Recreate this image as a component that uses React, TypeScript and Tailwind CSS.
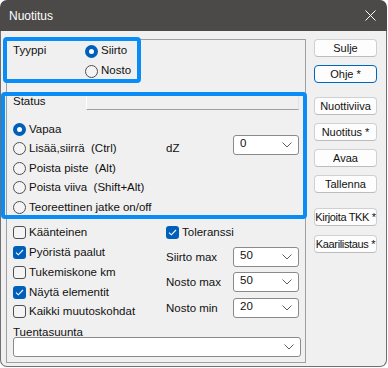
import React from "react";

const Chevron = () => (
  <svg width="10" height="6" viewBox="0 0 10 6" className="shrink-0">
    <path d="M0.5 0.5 L5 5 L9.5 0.5" fill="none" stroke="#606060" strokeWidth="1" />
  </svg>
);

const Radio = ({ label, checked = false }: { label: string; checked?: boolean }) => (
  <div className="flex items-center gap-[3px] h-full">
    {checked ? (
      <div className="w-[13px] h-[13px] rounded-full bg-[#005fb8] flex items-center justify-center shrink-0">
        <div className="w-[5px] h-[5px] rounded-full bg-white" />
      </div>
    ) : (
      <div className="w-[13px] h-[13px] rounded-full border border-[#4f4f4f] bg-[#f4f4f4] shrink-0" />
    )}
    <span className="whitespace-pre">{label}</span>
  </div>
);

const Check = ({ label, checked = false }: { label: string; checked?: boolean }) => (
  <div className="flex items-center gap-[3px] h-full">
    {checked ? (
      <div className="w-[13px] h-[13px] rounded-[3px] bg-[#005fb8] flex items-center justify-center shrink-0">
        <svg width="9" height="7" viewBox="0 0 9 7">
          <path d="M1 3.6 L3.3 5.8 L8 1" fill="none" stroke="white" strokeWidth="1.1" />
        </svg>
      </div>
    ) : (
      <div className="w-[13px] h-[13px] rounded-[3px] border border-[#4f4f4f] bg-[#f4f4f4] shrink-0" />
    )}
    <span className="whitespace-nowrap">{label}</span>
  </div>
);

const Combo = ({ value = "", width }: { value?: string; width: string }) => (
  <div
    className={`${width} h-[20px] bg-white border border-[#8a8a8a] rounded-[3px] flex items-center justify-between pl-[6px] pr-[6px] shrink-0`}
  >
    <span className="leading-none -mt-[2px]">{value}</span>
    <Chevron />
  </div>
);

const Btn = ({ label, className = "", focus = false }: { label: string; className?: string; focus?: boolean }) => (
  <div
    className={`w-[63px] h-[18px] rounded-[4px] bg-[#fdfdfd] flex items-center justify-center overflow-hidden whitespace-nowrap text-[11px] ${
      focus ? "border border-[#0067c0]" : "border border-[#d0d0d0] border-b-[#bdbdbd]"
    } ${className}`}
  >
    <span className="shrink-0">{label}</span>
  </div>
);

export default function App() {
  return (
    <div className="w-[388px] h-[368px] bg-white relative text-[11.5px] text-[#111] font-['Liberation_Sans',Arial,sans-serif]">
      <div className="w-[387px] h-[367px] flex flex-col">
        {/* title bar */}
        <div className="h-[31px] bg-[#4b4a48] rounded-t-[7px] flex items-center justify-between pl-[9px] pr-[11px] shrink-0">
          <span className="text-white text-[12px]">Nuotitus</span>
          <svg width="11" height="11" viewBox="0 0 11 11">
            <path d="M0.5 0.5 L10.5 10.5 M10.5 0.5 L0.5 10.5" stroke="white" strokeWidth="1" />
          </svg>
        </div>

        {/* body */}
        <div className="flex-1 bg-[#f0f0f0] border-x border-b border-[#707070] rounded-b-[7px] flex pl-[5px] pt-[8px]">
          {/* left panel */}
          <div className="w-[300px] h-[324px] border border-[#a0a0a0] pl-[6px] pr-[6px] flex flex-col">
            {/* Tyyppi */}
            <div className="flex pt-[1px]">
              <div className="w-[72px] h-5 flex items-center">Tyyppi</div>
              <div className="flex flex-col">
                <div className="h-5">
                  <Radio label="Siirto" checked />
                </div>
                <div className="h-5">
                  <Radio label="Nosto" />
                </div>
              </div>
            </div>

            {/* Status header */}
            <div className="flex mt-[13px] h-[16px]">
              <div className="w-[73px] flex items-center">Status</div>
              <div className="w-[213px] border-l border-l-white border-t border-t-[#e2e2e2] border-b border-b-[#a0a0a0] border-r border-r-[#e2e2e2]" />
            </div>

            {/* Status radios */}
            <div className="flex mt-[9.5px]">
              <div className="w-[155px] flex flex-col">
                <div className="h-[19.5px]">
                  <Radio label="Vapaa" checked />
                </div>
                <div className="h-[19.5px]">
                  <Radio label="Lisää,siirrä  (Ctrl)" />
                </div>
                <div className="h-[19.5px]">
                  <Radio label="Poista piste  (Alt)" />
                </div>
                <div className="h-[19.5px]">
                  <Radio label="Poista viiva  (Shift+Alt)" />
                </div>
                <div className="h-[19.5px]">
                  <Radio label="Teoreettinen jatke on/off" />
                </div>
              </div>
              <div className="flex items-start">
                <div className="w-[67px] h-[19.5px] mt-[19.5px] flex items-center">dZ</div>
                <div className="mt-[15.5px]">
                  <Combo value="0" width="w-[66px]" />
                </div>
              </div>
            </div>

            {/* options */}
            <div className="flex mt-[6px]">
              <div className="w-[156px] flex flex-col">
                <div className="h-[19.75px]">
                  <Check label="Käänteinen" />
                </div>
                <div className="h-[19.75px]">
                  <Check label="Pyöristä paalut" checked />
                </div>
                <div className="h-[19.75px]">
                  <Check label="Tukemiskone km" />
                </div>
                <div className="h-[19.75px]">
                  <Check label="Näytä elementit" checked />
                </div>
                <div className="h-[19.75px]">
                  <Check label="Kaikki muutoskohdat" />
                </div>
              </div>
              <div className="flex flex-col">
                <div className="h-[19.75px]">
                  <Check label="Toleranssi" checked />
                </div>
                <div className="flex items-center mt-[4px]">
                  <div className="w-[67px] pt-[1px]">Siirto max</div>
                  <Combo value="50" width="w-[66px]" />
                </div>
                <div className="flex items-center mt-[5px]">
                  <div className="w-[67px] pt-[1px]">Nosto max</div>
                  <Combo value="50" width="w-[66px]" />
                </div>
                <div className="flex items-center mt-[6px]">
                  <div className="w-[67px] pt-[1px]">Nosto min</div>
                  <Combo value="20" width="w-[66px]" />
                </div>
              </div>
            </div>

            <div className="mt-[3px] h-[12px] leading-[15px]">Tuentasuunta</div>
            <Combo width="w-[288px]" />
          </div>

          {/* right buttons */}
          <div className="ml-[8px] flex flex-col">
            <Btn label="Sulje" />
            <Btn label="Ohje *" focus className="mt-[8px]" />
            <Btn label="Nuottiviiva" className="mt-[14px]" />
            <Btn label="Nuotitus *" className="mt-[8px]" />
            <Btn label="Avaa" className="mt-[8px]" />
            <Btn label="Tallenna" className="mt-[8px]" />
            <Btn label="Kirjoita TKK *" className="mt-[15px] tracking-[-0.35px]" />
            <Btn label="Kaarilistaus *" className="mt-[9px] tracking-[-0.35px]" />
          </div>
        </div>
      </div>

      {/* highlight overlays */}
      <div className="absolute left-[3px] top-[37px] w-[138px] h-[46px] border-[4px] border-[#0a8cf7] rounded-[4px] pointer-events-none" />
      <div className="absolute left-[1px] top-[92px] w-[306px] h-[127px] border-[4px] border-[#0a8cf7] rounded-[4px] pointer-events-none" />
    </div>
  );
}
